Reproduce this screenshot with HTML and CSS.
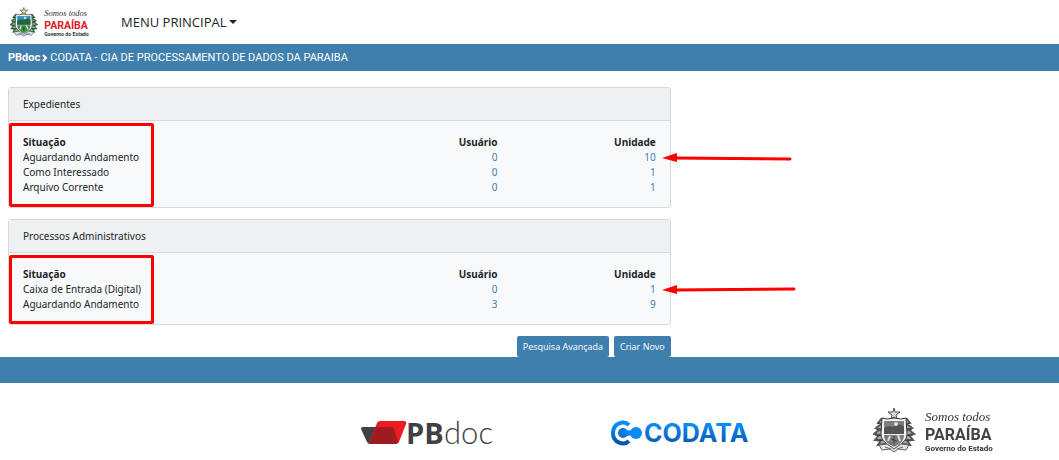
FILE: index.html
```html
<!DOCTYPE html>
<html lang="pt-BR">
<head>
    <meta charset="UTF-8">
    <meta name="viewport" content="width=device-width, initial-scale=1.0">
    <title>PBdoc</title>
    <link rel="stylesheet" href="styles.css">
</head>
<body>
    <header class="navbar">
        <a class="brand" href="#" aria-label="Governo do Estado da Paraíba">
            <svg class="brand-logo" viewBox="0 0 120 48">
                <defs>
                    <g id="paraiba">
                        <!-- ramos -->
                        <path d="M9 12 5 17l3 1-5 4 4 1-6 5 5 1-4 5 6 0-3 5 7-1 0 4 6-3M33 12l4 5-3 1 5 4-4 1 6 5-5 1 4 5-6 0 3 5-7-1 0 4-6-3" fill="#9ab58f" stroke="#35643b" stroke-width="2"/>
                        <path d="M5 17l5 2M3 23l7 2M2 29l8 1M4 35l8-1M37 17l-5 2M39 23l-7 2M40 29l-8 1M38 35l-8-1" stroke="#28442e" fill="none"/>
                        <!-- estrela -->
                        <path d="M21 2l1 4 5 0-4 3 1 4-3-2-3 2 1-4-4-3 5 0z" fill="#e8dc9c" stroke="#57502e" stroke-width="1"/>
                        <!-- escudo -->
                        <path d="M9 12l5 1 7-1 7 1 5-1 1 16c0 7-6 10-13 15C14 38 8 35 8 28z" fill="#f4f4f4" stroke="#333" stroke-width="1"/>
                        <path d="M11 15h20v13H11z" fill="#2a8fc4"/>
                        <path d="M11 22c5-4 8 0 11-2s6-2 9 1v7H11z" fill="#24633b"/>
                        <circle cx="23" cy="18" r="2" fill="#f3e39b"/>
                        <path d="M11 29h20c0 6-4 9-10 12-6-3-10-6-10-12z" fill="#3e924d"/>
                        <path d="M17 30l-2 5M25 29l2 6" stroke="#d5e6b6" stroke-width="2"/>
                        <path d="M21 30v8M18 33l6 2" stroke="#28442e" stroke-width="1"/>
                        <path d="M6 39l8-1 7 5 7-5 8 1-3 5-8-1-4 3-4-3-8 1z" fill="#dfe4e8" stroke="#56616b" stroke-width="1"/>
                        <path d="M12 41l6 2M30 41l-6 2" stroke="#3b6ea0"/>
                    </g>
                </defs>
                <use href="#paraiba"/>
                <text class="logo-script" x="52" y="15">Somos todos</text>
                <text class="logo-state" x="52" y="34">PARAÍBA</text>
                <text class="logo-gov" x="52" y="45">Governo do Estado</text>
            </svg>
        </a>
        <button class="menu-toggle" type="button">MENU PRINCIPAL<span class="caret"></span></button>
    </header>

    <nav class="breadcrumb">
        <strong>PBdoc</strong>
        <svg class="chevron" viewBox="0 0 6 8"><path d="M1 1l3 3-3 3" fill="none" stroke="#fff" stroke-width="2"/></svg>
        <span>CODATA - CIA DE PROCESSAMENTO DE DADOS DA PARAIBA</span>
    </nav>

    <main class="content">
        <section class="card">
            <h2 class="card-header">Expedientes</h2>
            <div class="card-body">
                <table class="summary">
                    <thead>
                        <tr><th>Situação</th><th>Usuário</th><th>Unidade</th></tr>
                    </thead>
                    <tbody>
                        <tr><td>Aguardando Andamento</td><td><a href="#">0</a></td><td><a href="#">10</a></td></tr>
                        <tr><td>Como Interessado</td><td><a href="#">0</a></td><td><a href="#">1</a></td></tr>
                        <tr><td>Arquivo Corrente</td><td><a href="#">0</a></td><td><a href="#">1</a></td></tr>
                    </tbody>
                </table>
                <div class="highlight"></div>
                <svg class="arrow" viewBox="0 0 134 12"><path d="M12 6L128 7" stroke="#f00" stroke-width="3" stroke-linecap="round"/><path d="M0 6l15-5v9z" fill="#f00"/></svg>
            </div>
        </section>

        <section class="card">
            <h2 class="card-header">Processos Administrativos</h2>
            <div class="card-body">
                <table class="summary">
                    <thead>
                        <tr><th>Situação</th><th>Usuário</th><th>Unidade</th></tr>
                    </thead>
                    <tbody>
                        <tr><td>Caixa de Entrada (Digital)</td><td><a href="#">0</a></td><td><a href="#">1</a></td></tr>
                        <tr><td>Aguardando Andamento</td><td><a href="#">3</a></td><td><a href="#">9</a></td></tr>
                    </tbody>
                </table>
                <div class="highlight"></div>
                <svg class="arrow" viewBox="0 0 134 12"><path d="M12 6L132 5" stroke="#f00" stroke-width="3" stroke-linecap="round"/><path d="M0 6l15-5v9z" fill="#f00"/></svg>
            </div>
        </section>

        <div class="actions">
            <button class="btn" type="button">Pesquisa Avançada</button>
            <button class="btn" type="button">Criar Novo</button>
        </div>
    </main>

    <footer>
        <div class="footer-bar"></div>
        <div class="footer-logos">
            <svg class="logo-pbdoc" viewBox="0 0 134 36" role="img" aria-label="PBdoc">
                <path d="M2 12h25l7 17H9q-2 0-3-2L0 14q0-2 2-2z" fill="#414042"/>
                <path d="M19 6h24q3 0 2 3l-7 18q-1 2-3 2H8L16 8q1-2 3-2z" fill="#ed1c24"/>
                <path d="M15 12h15q2 0 3 2l4 13-2 2H8z" fill="#9e1b1f"/>
                <text class="pb" x="45" y="29">PB</text>
                <text class="doc" x="83" y="29">doc</text>
            </svg>
            <svg class="logo-codata" viewBox="0 0 138 30" role="img" aria-label="CODATA">
                <defs>
                    <linearGradient id="azul" x1="0" y1="0" x2="0" y2="1">
                        <stop offset="0.2" stop-color="#0a8cf5"/>
                        <stop offset="0.9" stop-color="#0757ae"/>
                    </linearGradient>
                </defs>
                <path d="M18 7C13 2 2 5 2 15s11 13 16 8" fill="none" stroke="url(#azul)" stroke-width="4"/>
                <circle cx="12" cy="15" r="5" fill="#0874d8"/>
                <path d="M14 11q5 3 10 0v8q-5-3-10 0z" fill="#0a84ee"/>
                <circle cx="25" cy="15" r="6" fill="#0a8cf5"/>
                <text class="codata" x="33" y="24" fill="url(#azul)">CODATA</text>
            </svg>
            <svg class="logo-paraiba" viewBox="0 0 120 48" role="img" aria-label="Paraíba">
                <use href="#paraiba"/>
                <text class="logo-script" x="52" y="15">Somos todos</text>
                <text class="logo-state" x="52" y="34">PARAÍBA</text>
                <text class="logo-gov" x="52" y="45">Governo do Estado</text>
            </svg>
        </div>
    </footer>
</body>
</html>
```

FILE: styles.css
```css
* {
    box-sizing: border-box;
}

body {
    font-family: "Noto Sans", sans-serif;
    font-size: 10px;
    line-height: 15px;
    margin: 0;
    background-color: #fff;
    color: #212529;
}

.navbar {
    height: 44px;
    padding: 0 10px;
    display: flex;
    align-items: center;
    gap: 32px;
}

.brand-logo {
    display: block;
    width: 79px;
    height: 32px;
}

.logo-script {
    font-family: "Liberation Serif", serif;
    font-size: 13px;
    font-style: italic;
    fill: #333;
}

.logo-state {
    font-family: Roboto, sans-serif;
    font-size: 16px;
    font-weight: 700;
    fill: #e0191f;
}

.logo-gov {
    font-family: Roboto, sans-serif;
    font-size: 8px;
    font-weight: 700;
    fill: #333;
}

.menu-toggle {
    display: flex;
    align-items: center;
    gap: 3px;
    padding: 0;
    border: 0;
    background: none;
    font-family: "Open Sans", sans-serif;
    font-size: 13px;
    color: #212529;
}

.caret {
    border-top: 4px solid #212529;
    border-left: 4px solid transparent;
    border-right: 4px solid transparent;
}

.breadcrumb {
    display: flex;
    align-items: center;
    gap: 2px;
    padding: 6px 8px;
    background: #3f7fae;
    color: #fff;
    font-family: Roboto, sans-serif;
    font-size: 11px;
}

.chevron {
    width: 6px;
    height: 8px;
}

.content {
    width: 64%;
    padding: 16px 7px 0 8px;
}

.card {
    margin-bottom: 11px;
    border: 1px solid #d6d8da;
    border-radius: 3px;
    background: #f8f9fb;
}

.card-header {
    margin: 0;
    padding: 9px 14px;
    border-bottom: 1px solid #d6d8da;
    background: #eff0f2;
    font-size: 10px;
    line-height: 14px;
    font-weight: 400;
}

.card-body {
    position: relative;
    padding: 14px 14px 12px;
}

.summary {
    width: 100%;
    table-layout: fixed;
    border-collapse: collapse;
}

.summary th,
.summary td {
    padding: 0;
    width: 25%;
    text-align: right;
}

.summary th:first-child,
.summary td:first-child {
    width: 50%;
    text-align: left;
}

.summary a {
    color: #3f7fae;
    text-decoration: none;
}

.highlight {
    position: absolute;
    top: 2px;
    bottom: 0;
    left: 0;
    width: 145px;
    border: 3px solid #f00;
    border-radius: 2px;
}

.arrow {
    position: absolute;
    top: 31px;
    left: calc(100% - 8px);
    width: 134px;
    height: 12px;
}

.actions {
    display: flex;
    justify-content: flex-end;
    gap: 5px;
}

.btn {
    padding: 3px 6px;
    border: 0;
    border-radius: 2px;
    background: #3f7fae;
    color: #fff;
    font-family: "Open Sans", sans-serif;
    font-size: 9px;
    line-height: 15px;
}

.footer-bar {
    height: 26px;
    background: #3f7fae;
}

.footer-logos {
    display: grid;
    grid-template-columns: repeat(3, 1fr);
    justify-items: center;
    align-items: center;
    padding: 23px 0 0 28.5%;
}

.logo-pbdoc {
    width: 134px;
    height: 36px;
    margin-top: 6px;
}

.pb {
    font-family: "Open Sans", sans-serif;
    font-size: 29px;
    font-weight: 700;
    fill: #414042;
}

.doc {
    font-family: Lato, sans-serif;
    font-size: 31px;
    font-weight: 300;
    fill: #414042;
}

.logo-codata {
    width: 138px;
    height: 30px;
    margin-top: 6px;
}

.codata {
    font-family: Inter, sans-serif;
    font-size: 25px;
    font-weight: 700;
}

.logo-paraiba {
    width: 120px;
    height: 48px;
    filter: grayscale(1);
}

.logo-paraiba .logo-state {
    fill: #444;
}
```
